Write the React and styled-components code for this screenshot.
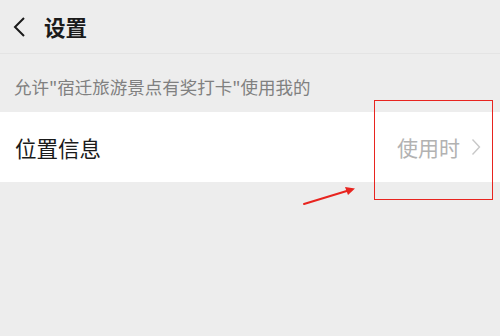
import styled, { createGlobalStyle } from "styled-components";

const GlobalStyle = createGlobalStyle`
  html, body {
    margin: 0;
    background: #ededed;
  }
  body {
    font-family: "Noto Sans CJK SC", "Liberation Sans", sans-serif;
  }
`;

const Page = styled.div`
  position: relative;
  width: 500px;
  height: 336px;
  background: #ededed;
  overflow: hidden;
`;

const Header = styled.div`
  height: 54px;
  display: flex;
  align-items: center;
  gap: 16px;
  padding: 0 12px;
  box-sizing: border-box;
  border-bottom: 1px solid #e4e4e4;
`;

const Title = styled.span`
  font-size: 21.5px;
  font-weight: bold;
  color: #1a1a1a;
  line-height: 1;
`;

const Hint = styled.div`
  padding: 22px 14px 0;
  height: 58px;
  box-sizing: border-box;
  font-size: 17.5px;
  color: #808080;
  line-height: 22px;
  white-space: nowrap;
`;

const Row = styled.div`
  height: 70px;
  background: #fff;
  display: flex;
  align-items: center;
  justify-content: space-between;
  padding: 0 19px 0 15px;
`;

const Label = styled.span`
  font-size: 21.5px;
  color: #1a1a1a;
`;

const Value = styled.span`
  display: flex;
  align-items: center;
  gap: 11px;
  font-size: 21px;
  color: #b2b2b2;
`;

const Mark = styled.div`
  position: absolute;
  left: 374px;
  top: 100px;
  width: 119px;
  height: 100px;
  box-sizing: border-box;
  border: 1.5px solid #e8241f;
`;

const Arrow = styled.svg`
  position: absolute;
  left: 300px;
  top: 182px;
`;

const Back = () => (
  <svg width="16" height="22" viewBox="0 0 16 22">
    <path d="M12 2 L3 11 L12 20" fill="none" stroke="#1a1a1a" strokeWidth="2" />
  </svg>
);

const Chevron = () => (
  <svg width="10" height="18" viewBox="0 0 10 18">
    <path d="M1.5 1.5 L8.5 9 L1.5 16.5" fill="none" stroke="#c8c8c8" strokeWidth="1.4" />
  </svg>
);

export default function App() {
  return (
    <>
      <GlobalStyle />
      <Page>
        <Header>
          <Back />
          <Title>设置</Title>
        </Header>
        <Hint>允许"宿迁旅游景点有奖打卡"使用我的</Hint>
        <Row>
          <Label>位置信息</Label>
          <Value>
            使用时
            <Chevron />
          </Value>
        </Row>
        <Mark />
        <Arrow width="60" height="28" viewBox="0 0 60 28">
          <path d="M4 22 L50 8" stroke="#e8241f" strokeWidth="2" strokeLinecap="round" />
          <path d="M55 6.5 L45 5 L48 13 Z" fill="#e8241f" />
        </Arrow>
      </Page>
    </>
  );
}
